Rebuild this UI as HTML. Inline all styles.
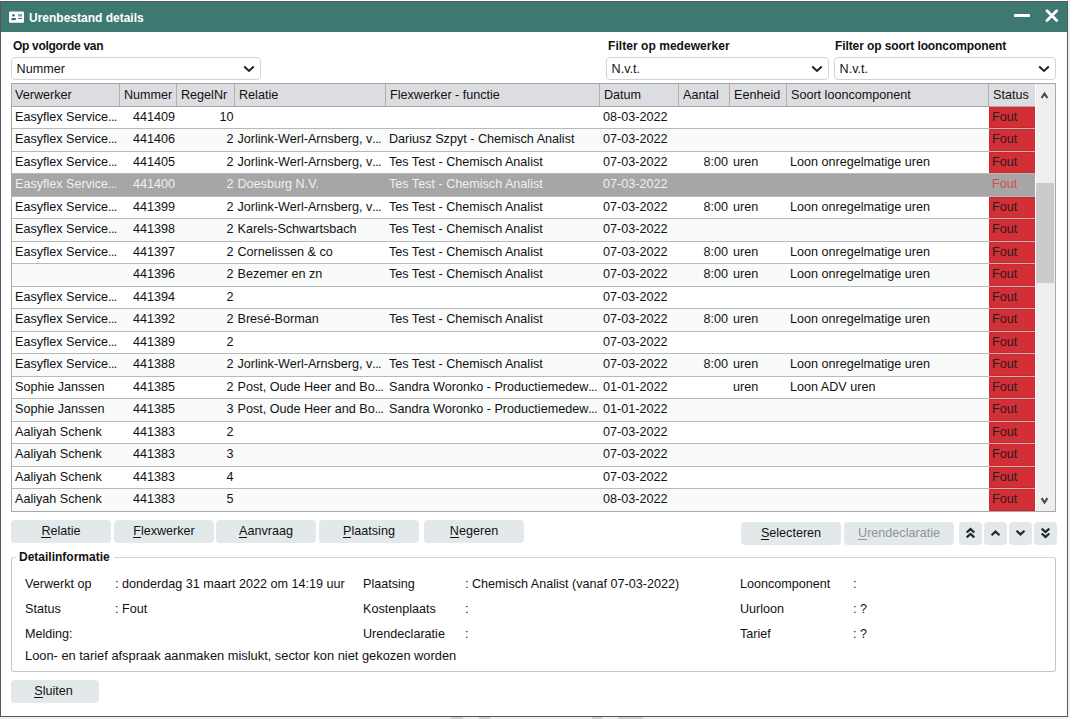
<!DOCTYPE html>
<html><head><meta charset="utf-8">
<style>
*{box-sizing:border-box;margin:0;padding:0}
html,body{width:1070px;height:719px;overflow:hidden;background:#ffffff;font-family:"Liberation Sans",sans-serif;color:#111}
.abs{position:absolute}
#win{position:absolute;left:0;top:1px;width:1068px;height:716px;border:1px solid #555759;background:#fff}
#title{position:absolute;left:1px;top:2px;width:1066px;height:30px;background:#3e7971}
#title .t{position:absolute;left:28px;top:9px;font-size:12px;font-weight:bold;color:#fff;line-height:14px;white-space:nowrap}
.lbl{position:absolute;font-size:12px;font-weight:bold;letter-spacing:-0.3px;line-height:14px;white-space:nowrap;color:#111}
.sel{position:absolute;top:57px;height:23px;border:1px solid #cdd5db;border-radius:4px;background:#fff}
.sel .v{position:absolute;left:4.6px;top:4px;font-size:12.6px;line-height:14px;white-space:nowrap}
.sel svg{position:absolute;top:7.2px}
#tbl{position:absolute;left:11px;top:83px;width:1045px;height:429px;border:1px solid #a8a8a8;background:#fff;overflow:hidden}
#hdr{position:absolute;left:0;top:0;width:1023px;height:23px;background:#dcdde0;border-bottom:1px solid #a8a8a8}
.hc{position:absolute;top:0;height:22px;border-right:1px solid #b0b0b0;font-size:12.6px;line-height:14px;padding-top:4px;white-space:nowrap;overflow:hidden}
.row{position:absolute;left:0;width:1023px;height:22.5px;border-bottom:1px solid #b9b9b9;font-size:12.6px;white-space:nowrap}
.row.alt{background:#f9fafa}
.row.s{background:#a6a6a6;color:#f0f0f0}
.c{position:absolute;top:3px;line-height:14px;white-space:nowrap}
.r{text-align:right}
.el{letter-spacing:-0.7px}
.st{position:absolute;left:977px;top:0;width:46px;height:100%;background:#d32f37;color:#2a1c1e;padding-left:3px;box-shadow:inset 0 0 0 1px #d2262d}
.row.s .st{background:transparent;color:#d94a50;box-shadow:none}
#sb{position:absolute;left:1024px;top:0;width:19px;height:427px;background:#efefef}
.btn{position:absolute;height:23px;background:#e3e8eb;border-radius:4px;font-size:12.6px;line-height:14px;text-align:center;padding-top:4px;color:#111;white-space:nowrap}
.btn u{text-decoration:none;border-bottom:1px solid currentColor;display:inline-block;line-height:11px}
#fs{position:absolute;left:11px;top:557px;width:1045px;height:115px;border:1px solid #c6c6c6;border-top-color:#d4d4d4;border-radius:3px}
.d{position:absolute;font-size:12.6px;line-height:14px;white-space:nowrap}
</style></head><body>
<div class="abs" style="left:1068px;top:0;width:2px;height:719px;background:#eef2f5"></div>
<div class="abs" style="left:0;top:717px;width:1070px;height:2px;background:#eef2f5"></div>
<div class="abs" style="left:451px;top:717px;width:12px;height:2px;background:#c8d0d8"></div>
<div class="abs" style="left:479px;top:717px;width:11px;height:2px;background:#c8d0d8"></div>
<div class="abs" style="left:592px;top:717px;width:10px;height:2px;background:#c8d0d8"></div>
<div class="abs" style="left:618px;top:717px;width:25px;height:2px;background:#c8d0d8"></div>
<div id="win"></div>
<div id="title">
  <svg class="abs" style="left:8px;top:9px" width="16" height="12" viewBox="0 0 16 12">
    <rect x="0" y="0.5" width="15" height="11.3" rx="1.2" fill="#fff"/>
    <circle cx="4.5" cy="4.3" r="1.35" fill="#3e7971"/>
    <rect x="2.2" y="7" width="4.8" height="2.2" rx="1" fill="#3e7971"/>
    <rect x="9.2" y="3" width="3.8" height="2.6" fill="#3e7971" opacity="0.65"/>
    <rect x="9.2" y="7" width="3.8" height="1" fill="#3e7971"/>
  </svg>
  <div class="t">Urenbestand details</div>
  <div class="abs" style="left:1013px;top:12px;width:16px;height:3px;background:#fff;border-radius:1px"></div>
  <svg class="abs" style="left:1043px;top:6px" width="17" height="17" viewBox="0 0 17 17">
    <path d="M3.0 2.8 L12.7 12.5 M12.7 2.8 L3.0 12.5" stroke="#fff" stroke-width="2.8" stroke-linecap="round"/>
  </svg>
</div>

<div class="lbl" style="left:13px;top:39px">Op volgorde van</div>
<div class="lbl" style="left:608px;top:39px;letter-spacing:0.05px">Filter op medewerker</div>
<div class="lbl" style="left:835px;top:39px;letter-spacing:-0.1px">Filter op soort looncomponent</div>

<div class="sel" style="left:11px;width:250px"><div class="v">Nummer</div>
  <svg style="left:230.5px" width="12" height="8" viewBox="0 0 12 8"><path d="M1.2 1.5 L6 6 L10.8 1.5" stroke="#1e2428" stroke-width="2" fill="none"/></svg></div>
<div class="sel" style="left:606px;width:223px"><div class="v">N.v.t.</div>
  <svg style="left:203.5px" width="12" height="8" viewBox="0 0 12 8"><path d="M1.2 1.5 L6 6 L10.8 1.5" stroke="#1e2428" stroke-width="2" fill="none"/></svg></div>
<div class="sel" style="left:834px;width:222px"><div class="v">N.v.t.</div>
  <svg style="left:202.5px" width="12" height="8" viewBox="0 0 12 8"><path d="M1.2 1.5 L6 6 L10.8 1.5" stroke="#1e2428" stroke-width="2" fill="none"/></svg></div>

<div id="tbl">
  <div id="hdr">
    <div class="hc" style="left:0;width:108px;padding-left:3px">Verwerker</div>
    <div class="hc" style="left:108px;width:57px;padding-left:4px">Nummer</div>
    <div class="hc" style="left:165px;width:58px;padding-left:4px">RegelNr</div>
    <div class="hc" style="left:223px;width:151px;padding-left:4px">Relatie</div>
    <div class="hc" style="left:374px;width:214px;padding-left:4px">Flexwerker - functie</div>
    <div class="hc" style="left:588px;width:79px;padding-left:4px">Datum</div>
    <div class="hc" style="left:667px;width:51px;padding-left:4px">Aantal</div>
    <div class="hc" style="left:718px;width:57px;padding-left:4px">Eenheid</div>
    <div class="hc" style="left:775px;width:202px;padding-left:4px">Soort looncomponent</div>
    <div class="hc" style="left:977px;width:46px;padding-left:4px;border-right:none">Status</div>
  </div>
  <div id="rows"><!--ROWS--><div class="row" style="top:22.5px"><div class="c" style="left:3px;width:103px">Easyflex Service<span class="el">...</span></div><div class="c r" style="left:110px;width:53px">441409</div><div class="c r" style="left:166px;width:55.5px">10</div><div class="c" style="left:591px;width:74px">08-03-2022</div><div class="st"><div class="c">Fout</div></div></div>
<div class="row alt" style="top:45.0px"><div class="c" style="left:3px;width:103px">Easyflex Service<span class="el">...</span></div><div class="c r" style="left:110px;width:53px">441406</div><div class="c r" style="left:166px;width:55.5px">2</div><div class="c" style="left:225.5px;width:145px">Jorlink-Werl-Arnsberg, v<span class="el">...</span></div><div class="c" style="left:377px;width:208px">Dariusz Szpyt - Chemisch Analist</div><div class="c" style="left:591px;width:74px">07-03-2022</div><div class="st"><div class="c">Fout</div></div></div>
<div class="row" style="top:67.5px"><div class="c" style="left:3px;width:103px">Easyflex Service<span class="el">...</span></div><div class="c r" style="left:110px;width:53px">441405</div><div class="c r" style="left:166px;width:55.5px">2</div><div class="c" style="left:225.5px;width:145px">Jorlink-Werl-Arnsberg, v<span class="el">...</span></div><div class="c" style="left:377px;width:208px">Tes Test - Chemisch Analist</div><div class="c" style="left:591px;width:74px">07-03-2022</div><div class="c r" style="left:668px;width:48px">8:00</div><div class="c" style="left:721px;width:52px">uren</div><div class="c" style="left:778px;width:196px">Loon onregelmatige uren</div><div class="st"><div class="c">Fout</div></div></div>
<div class="row s" style="top:90.0px"><div class="c" style="left:3px;width:103px">Easyflex Service<span class="el">...</span></div><div class="c r" style="left:110px;width:53px">441400</div><div class="c r" style="left:166px;width:55.5px">2</div><div class="c" style="left:225.5px;width:145px">Doesburg N.V.</div><div class="c" style="left:377px;width:208px">Tes Test - Chemisch Analist</div><div class="c" style="left:591px;width:74px">07-03-2022</div><div class="st"><div class="c">Fout</div></div></div>
<div class="row" style="top:112.5px"><div class="c" style="left:3px;width:103px">Easyflex Service<span class="el">...</span></div><div class="c r" style="left:110px;width:53px">441399</div><div class="c r" style="left:166px;width:55.5px">2</div><div class="c" style="left:225.5px;width:145px">Jorlink-Werl-Arnsberg, v<span class="el">...</span></div><div class="c" style="left:377px;width:208px">Tes Test - Chemisch Analist</div><div class="c" style="left:591px;width:74px">07-03-2022</div><div class="c r" style="left:668px;width:48px">8:00</div><div class="c" style="left:721px;width:52px">uren</div><div class="c" style="left:778px;width:196px">Loon onregelmatige uren</div><div class="st"><div class="c">Fout</div></div></div>
<div class="row alt" style="top:135.0px"><div class="c" style="left:3px;width:103px">Easyflex Service<span class="el">...</span></div><div class="c r" style="left:110px;width:53px">441398</div><div class="c r" style="left:166px;width:55.5px">2</div><div class="c" style="left:225.5px;width:145px">Karels-Schwartsbach</div><div class="c" style="left:377px;width:208px">Tes Test - Chemisch Analist</div><div class="c" style="left:591px;width:74px">07-03-2022</div><div class="st"><div class="c">Fout</div></div></div>
<div class="row" style="top:157.5px"><div class="c" style="left:3px;width:103px">Easyflex Service<span class="el">...</span></div><div class="c r" style="left:110px;width:53px">441397</div><div class="c r" style="left:166px;width:55.5px">2</div><div class="c" style="left:225.5px;width:145px">Cornelissen &amp; co</div><div class="c" style="left:377px;width:208px">Tes Test - Chemisch Analist</div><div class="c" style="left:591px;width:74px">07-03-2022</div><div class="c r" style="left:668px;width:48px">8:00</div><div class="c" style="left:721px;width:52px">uren</div><div class="c" style="left:778px;width:196px">Loon onregelmatige uren</div><div class="st"><div class="c">Fout</div></div></div>
<div class="row alt" style="top:180.0px"><div class="c r" style="left:110px;width:53px">441396</div><div class="c r" style="left:166px;width:55.5px">2</div><div class="c" style="left:225.5px;width:145px">Bezemer en zn</div><div class="c" style="left:377px;width:208px">Tes Test - Chemisch Analist</div><div class="c" style="left:591px;width:74px">07-03-2022</div><div class="c r" style="left:668px;width:48px">8:00</div><div class="c" style="left:721px;width:52px">uren</div><div class="c" style="left:778px;width:196px">Loon onregelmatige uren</div><div class="st"><div class="c">Fout</div></div></div>
<div class="row" style="top:202.5px"><div class="c" style="left:3px;width:103px">Easyflex Service<span class="el">...</span></div><div class="c r" style="left:110px;width:53px">441394</div><div class="c r" style="left:166px;width:55.5px">2</div><div class="c" style="left:591px;width:74px">07-03-2022</div><div class="st"><div class="c">Fout</div></div></div>
<div class="row alt" style="top:225.0px"><div class="c" style="left:3px;width:103px">Easyflex Service<span class="el">...</span></div><div class="c r" style="left:110px;width:53px">441392</div><div class="c r" style="left:166px;width:55.5px">2</div><div class="c" style="left:225.5px;width:145px">Bresé-Borman</div><div class="c" style="left:377px;width:208px">Tes Test - Chemisch Analist</div><div class="c" style="left:591px;width:74px">07-03-2022</div><div class="c r" style="left:668px;width:48px">8:00</div><div class="c" style="left:721px;width:52px">uren</div><div class="c" style="left:778px;width:196px">Loon onregelmatige uren</div><div class="st"><div class="c">Fout</div></div></div>
<div class="row" style="top:247.5px"><div class="c" style="left:3px;width:103px">Easyflex Service<span class="el">...</span></div><div class="c r" style="left:110px;width:53px">441389</div><div class="c r" style="left:166px;width:55.5px">2</div><div class="c" style="left:591px;width:74px">07-03-2022</div><div class="st"><div class="c">Fout</div></div></div>
<div class="row alt" style="top:270.0px"><div class="c" style="left:3px;width:103px">Easyflex Service<span class="el">...</span></div><div class="c r" style="left:110px;width:53px">441388</div><div class="c r" style="left:166px;width:55.5px">2</div><div class="c" style="left:225.5px;width:145px">Jorlink-Werl-Arnsberg, v<span class="el">...</span></div><div class="c" style="left:377px;width:208px">Tes Test - Chemisch Analist</div><div class="c" style="left:591px;width:74px">07-03-2022</div><div class="c r" style="left:668px;width:48px">8:00</div><div class="c" style="left:721px;width:52px">uren</div><div class="c" style="left:778px;width:196px">Loon onregelmatige uren</div><div class="st"><div class="c">Fout</div></div></div>
<div class="row" style="top:292.5px"><div class="c" style="left:3px;width:103px">Sophie Janssen</div><div class="c r" style="left:110px;width:53px">441385</div><div class="c r" style="left:166px;width:55.5px">2</div><div class="c" style="left:225.5px;width:145px">Post, Oude Heer and Bo<span class="el">...</span></div><div class="c" style="left:377px;width:208px">Sandra Woronko - Productiemedew<span class="el">...</span></div><div class="c" style="left:591px;width:74px">01-01-2022</div><div class="c" style="left:721px;width:52px">uren</div><div class="c" style="left:778px;width:196px">Loon ADV uren</div><div class="st"><div class="c">Fout</div></div></div>
<div class="row alt" style="top:315.0px"><div class="c" style="left:3px;width:103px">Sophie Janssen</div><div class="c r" style="left:110px;width:53px">441385</div><div class="c r" style="left:166px;width:55.5px">3</div><div class="c" style="left:225.5px;width:145px">Post, Oude Heer and Bo<span class="el">...</span></div><div class="c" style="left:377px;width:208px">Sandra Woronko - Productiemedew<span class="el">...</span></div><div class="c" style="left:591px;width:74px">01-01-2022</div><div class="st"><div class="c">Fout</div></div></div>
<div class="row" style="top:337.5px"><div class="c" style="left:3px;width:103px">Aaliyah Schenk</div><div class="c r" style="left:110px;width:53px">441383</div><div class="c r" style="left:166px;width:55.5px">2</div><div class="c" style="left:591px;width:74px">07-03-2022</div><div class="st"><div class="c">Fout</div></div></div>
<div class="row alt" style="top:360.0px"><div class="c" style="left:3px;width:103px">Aaliyah Schenk</div><div class="c r" style="left:110px;width:53px">441383</div><div class="c r" style="left:166px;width:55.5px">3</div><div class="c" style="left:591px;width:74px">07-03-2022</div><div class="st"><div class="c">Fout</div></div></div>
<div class="row" style="top:382.5px"><div class="c" style="left:3px;width:103px">Aaliyah Schenk</div><div class="c r" style="left:110px;width:53px">441383</div><div class="c r" style="left:166px;width:55.5px">4</div><div class="c" style="left:591px;width:74px">07-03-2022</div><div class="st"><div class="c">Fout</div></div></div>
<div class="row alt" style="top:405.0px"><div class="c" style="left:3px;width:103px">Aaliyah Schenk</div><div class="c r" style="left:110px;width:53px">441383</div><div class="c r" style="left:166px;width:55.5px">5</div><div class="c" style="left:591px;width:74px">08-03-2022</div><div class="st"><div class="c">Fout</div></div></div><!--/ROWS--></div>
  <div id="sb">
    <div class="abs" style="left:0;top:99px;width:18px;height:100px;background:#cbcbcb"></div>
    <svg class="abs" style="left:0;top:0" width="19" height="427" viewBox="0 0 19 427"><path d="M5.6 14 L8.5 9.7 L11.4 14" stroke="#4a4a4a" stroke-width="2.1" fill="none" stroke-linejoin="miter"/><path d="M5.6 414.2 L8.5 418.5 L11.4 414.2" stroke="#4a4a4a" stroke-width="2.1" fill="none"/></svg>
  </div>
</div>

<div class="btn" style="left:11px;top:520px;width:100px"><u>R</u>elatie</div>
<div class="btn" style="left:114px;top:520px;width:100px"><u>F</u>lexwerker</div>
<div class="btn" style="left:216px;top:520px;width:100px"><u>A</u>anvraag</div>
<div class="btn" style="left:319px;top:520px;width:100px"><u>P</u>laatsing</div>
<div class="btn" style="left:424px;top:520px;width:100px"><u>N</u>egeren</div>
<div class="btn" style="left:741px;top:522px;width:100px"><u>S</u>electeren</div>
<div class="btn" style="left:844px;top:522px;width:110px;color:#8d959b"><u>U</u>rendeclaratie</div>
<div class="btn" style="left:959px;top:522px;width:23px"><svg class="abs" style="left:6px;top:5px" width="11" height="12" viewBox="0 0 11 12"><path d="M1.7 5.5 L5.5 2.1 L9.3 5.5 M1.7 10.4 L5.5 7.0 L9.3 10.4" stroke="#1f2a30" stroke-width="2.2" fill="none"/></svg></div>
<div class="btn" style="left:984px;top:522px;width:23px"><svg class="abs" style="left:6px;top:7px" width="11" height="8" viewBox="0 0 11 8"><path d="M1.5 6.2 L5.5 2.6 L9.5 6.2" stroke="#1f2a30" stroke-width="2.2" fill="none"/></svg></div>
<div class="btn" style="left:1009px;top:522px;width:23px"><svg class="abs" style="left:6px;top:7px" width="11" height="8" viewBox="0 0 11 8"><path d="M1.5 1.8 L5.5 5.4 L9.5 1.8" stroke="#1f2a30" stroke-width="2.2" fill="none"/></svg></div>
<div class="btn" style="left:1034px;top:522px;width:23px"><svg class="abs" style="left:6px;top:5px" width="11" height="12" viewBox="0 0 11 12"><path d="M1.7 1.6 L5.5 5.0 L9.3 1.6 M1.7 6.5 L5.5 9.9 L9.3 6.5" stroke="#1f2a30" stroke-width="2.2" fill="none"/></svg></div>

<div id="fs"></div>
<div class="abs" style="left:16px;top:550px;width:98px;height:14px;background:#fff"></div>
<div class="lbl" style="left:19px;top:550px;letter-spacing:0px">Detailinformatie</div>

<div class="d" style="left:25px;top:577px">Verwerkt op</div>
<div class="d" style="left:115px;top:577px">: donderdag 31 maart 2022 om 14:19 uur</div>
<div class="d" style="left:25px;top:602px">Status</div>
<div class="d" style="left:115px;top:602px">: Fout</div>
<div class="d" style="left:25px;top:627px">Melding:</div>
<div class="d" style="left:363px;top:577px">Plaatsing</div>
<div class="d" style="left:465px;top:577px">: Chemisch Analist (vanaf 07-03-2022)</div>
<div class="d" style="left:363px;top:602px">Kostenplaats</div>
<div class="d" style="left:465px;top:602px">:</div>
<div class="d" style="left:363px;top:627px">Urendeclaratie</div>
<div class="d" style="left:465px;top:627px">:</div>
<div class="d" style="left:740px;top:577px">Looncomponent</div>
<div class="d" style="left:853px;top:577px">:</div>
<div class="d" style="left:740px;top:602px">Uurloon</div>
<div class="d" style="left:853px;top:602px">: ?</div>
<div class="d" style="left:740px;top:627px">Tarief</div>
<div class="d" style="left:853px;top:627px">: ?</div>
<div class="d" style="left:25px;top:649px;font-size:12.85px">Loon- en tarief afspraak aanmaken mislukt, sector kon niet gekozen worden</div>

<div class="btn" style="left:11px;top:680px;width:88px;padding-right:3px"><u>S</u>luiten</div>
</body></html>
